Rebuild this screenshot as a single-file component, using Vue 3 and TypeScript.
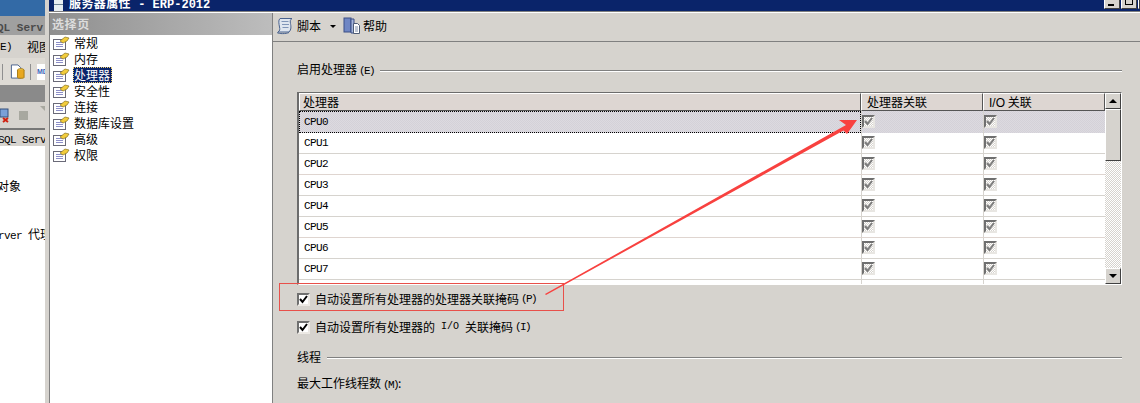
<script setup lang="ts">
const pages = ['常规', '内存', '处理器', '安全性', '连接', '数据库设置', '高级', '权限']
const cpus = ['CPU0', 'CPU1', 'CPU2', 'CPU3', 'CPU4', 'CPU5', 'CPU6', 'CPU7']
</script>

<template>
  <div class="screen">
    <aside class="behind">
      <div class="b-blue"></div>
      <div class="b-title"><span class="title-mono">QL Serv</span></div>
      <div class="b-menu"><span class="mono">E)</span><span class="b-view">视图</span></div>
      <div class="b-tools">
        <i class="sep"></i>
        <svg width="16" height="17" viewBox="0 0 16 17"><path d="M1.500 1.500h7l3 3v11h-10z" fill="#fff" stroke="#46608c"/><ellipse cx="11.500" cy="7" rx="3.500" ry="1.500" fill="#f6cf52" stroke="#a87a10"/><path d="M8 7v8c0 1 7 1 7 0V7" fill="#e8a820" stroke="#a87a10"/></svg>
        <i class="sep sep2"></i>
        <span class="b-mdx">MD</span>
      </div>
      <div class="b-bar"></div>
      <div class="b-tools2">
        <svg width="10" height="16" viewBox="0 0 10 16"><rect x="0" y="2" width="8" height="8" fill="#7aa0d8" stroke="#35507c"/><path d="M3 11l5 4M8 11l-5 4" stroke="#d02010" stroke-width="2"/></svg>
        <i class="stop"></i>
        <i class="tri"></i>
      </div>
      <div class="b-row"><span class="mono">SQL Serv</span></div>
      <div class="b-tree">
        <div class="obj">对象</div>
        <div class="agent"><span class="mono pre">rver </span>代理</div>
      </div>
    </aside>

    <main class="dialog">
      <header class="titlebar">
        <svg class="t-icon" width="9" height="12" viewBox="0 0 9 12"><rect x="0" y="0" width="9" height="12" fill="#e8eef2"/><rect x="0" y="4" width="9" height="1" fill="#6f8596"/></svg>
        <b class="t-text">服务器属性<span class="mono-b"> - ERP-2012</span></b>
        <div class="t-btns"><span class="tb"><i class="tb-min"></i></span><span class="tb"><i class="tb-max"></i></span><span class="tb tb-end"></span></div>
      </header>
      <div class="body">
        <nav class="side">
          <div class="side-head">选择页</div>
          <ul class="pages">
            <li v-for="p in pages" :key="p">
              <svg width="17" height="15" viewBox="0 0 17 15">
                <rect x="0.500" y="3.500" width="12" height="10" fill="#fff" stroke="#6a6a78"/>
                <path d="M3 6.500h7M3 8.500h7M3 10.500h7" stroke="#8d8fc8"/>
                <path d="M7 5l5-4 4 1-2 3-4 2z" fill="#f2cc3c" stroke="#8a7420" stroke-width=".7"/>
              </svg>
              <span :class="{ sel: p === '处理器' }">{{ p }}</span>
            </li>
          </ul>
        </nav>
        <section class="content">
          <div class="toolbar">
            <svg width="19" height="18" viewBox="0 0 19 18"><path d="M4 1.500h12c-2 1-2 3-1.500 5 .5 3 1 6-1.500 8.500H2c2-1 2-3 1.500-5C3 7 2 3 4 1.500z" fill="#dfe6f0" stroke="#49628e"/><path d="M5.500 4.500h7M6 7.500h7M6.500 10.500h6" stroke="#8095b8"/><path d="M1 15.500c2 1.500 9 1.500 12 0" fill="none" stroke="#49628e"/></svg>
            <span class="tool-l">脚本</span>
            <i class="caret"></i>
            <svg class="help" width="18" height="18" viewBox="0 0 18 18"><rect x="1" y="1" width="7" height="14" fill="#6f86c4" stroke="#3b4f86"/><path d="M8 2h3v14H8z" fill="#a6b6dc" stroke="#3b4f86"/><path d="M10.500 6.500h4l2 2v8h-6z" fill="#fff" stroke="#4e5c76"/><path d="M12 10h3M12 12h3M12 14h3" stroke="#7d8ca8"/></svg>
            <span class="tool-l">帮助</span>
          </div>
          <div class="form">
            <div class="legend first"><span>启用处理器<span class="ak">(E)</span></span><i></i></div>
            <div class="grid">
              <div class="table">
                <div class="thead">
                  <div class="th c1">处理器</div>
                  <div class="th c2">处理器关联</div>
                  <div class="th c3"><span class="io">I/O</span> 关联</div>
                </div>
                <div v-for="(c, i) in cpus" :key="c" class="tr" :class="{ active: i === 0, pink: i % 3 === 2 }">
                  <div class="td c1"><span class="mono">{{ c }}</span></div>
                  <div class="td c2"><span class="dis"><svg width="9" height="9" viewBox="0 0 9 9"><path d="M1 4l2.500 3L8 1" fill="none" stroke="#7c7c7c" stroke-width="2"/></svg></span></div>
                  <div class="td c3"><span class="dis"><svg width="9" height="9" viewBox="0 0 9 9"><path d="M1 4l2.500 3L8 1" fill="none" stroke="#7c7c7c" stroke-width="2"/></svg></span></div>
                </div>
                <div class="tr stub"><div class="td c1"></div><div class="td c2"></div><div class="td c3"></div></div>
              </div>
              <div class="scroll">
                <div class="sb up"><i></i></div>
                <div class="thumb"></div>
                <div class="track"></div>
                <div class="sb down"><i></i></div>
              </div>
            </div>
            <label class="check one"><span class="box"><svg width="9" height="9" viewBox="0 0 9 9"><path d="M1 4l2.500 3L8 1" fill="none" stroke="#000" stroke-width="2"/></svg></span>自动设置所有处理器的处理器关联掩码<span class="ak">(P)</span></label>
            <label class="check two"><span class="box"><svg width="9" height="9" viewBox="0 0 9 9"><path d="M1 4l2.500 3L8 1" fill="none" stroke="#000" stroke-width="2"/></svg></span>自动设置所有处理器的<span class="mono io2">I/O</span>关联掩码<span class="ak">(I)</span></label>
            <div class="legend thread"><span>线程</span><i></i></div>
            <div class="field">最大工作线程数<span class="ak">(M)</span>:</div>
          </div>
        </section>
      </div>
    </main>

    <svg class="mark" width="1140" height="403" viewBox="0 0 1140 403">
      <rect x="279.500" y="283.500" width="284" height="27" fill="none" stroke="#e8504a"/>
      <path d="M545 294L846 125L839 120L857 120L847 134L843.500 130.500L546 295z" fill="#f8413f"/>
    </svg>
  </div>
</template>

<style>
html, body { margin: 0; background: #fff; overflow: hidden; }
</style>

<style scoped>
.screen { position: relative; width: 1140px; height: 403px; display: flex; overflow: hidden; font: 12px/16px "Noto Sans CJK SC", sans-serif; color: #000; background: #fff; }
.mono { font: 11px/16px "Liberation Mono", monospace; letter-spacing: -.6px; flex: none; }
.pre { white-space: pre; }
.ak { font: 11px/16px "Liberation Mono", monospace; letter-spacing: -1.600px; margin-left: 2px; }

.behind { width: 45px; flex: none; display: flex; flex-direction: column; overflow: hidden; white-space: nowrap; }
.b-blue { height: 16px; background: #336aa6; }
.b-title { height: 19px; background: #a0a0a0; line-height: 19px; margin-right: -20px; }
.title-mono { font: bold 11px/19px "Liberation Mono", monospace; color: #4a4a4a; margin-left: -3px; display: inline-block; }
.b-menu { height: 23px; background: #d6d3ce; display: flex; align-items: center; }
.b-menu .mono { width: 27px; }
.b-view { flex: none; }
.b-tools { height: 27px; background: #dedbd5; display: flex; align-items: center; }
.sep { width: 1px; height: 16px; background: #8f8f8f; margin: 0 7px 0 2px; flex: none; }
.sep2 { margin: 0 6px 0 5px; }
.b-mdx { font: bold 7px/16px "Liberation Sans", sans-serif; color: #3b66b8; background: #fff; flex: none; width: 8px; overflow: hidden; }
.b-bar { height: 17px; background: #8a8a8a; }
.b-tools2 { height: 28px; background: #d6d3ce; display: flex; align-items: center; border-bottom: 2px solid #777; box-sizing: border-box; }
.b-tools2 svg { flex: none; }
.stop { width: 9px; height: 9px; background: #a8a8a0; margin-left: 9px; flex: none; }
.tri { width: 0; height: 0; border: 5px solid transparent; border-top-color: #a8a8a0; margin: -8px 0 0 12px; flex: none; }
.b-row { height: 16px; background: #d6d3ce; }
.b-row .mono { display: inline-block; margin-left: -2px; }
.b-tree { flex: 1; background: #fff; }
.obj { margin: 32px 0 0 -3px; }
.agent { margin-top: 32px; margin-left: -2px; }

.dialog { flex: 1; min-width: 0; display: flex; flex-direction: column; background: #d6d3ce; border-left: 4px solid #d6d3ce; }
.titlebar { height: 12px; flex: none; background: #0a246a; display: flex; align-items: center; color: #fff; overflow: hidden; }
.t-icon { margin: 0 0 0 5px; flex: none; }
.t-text { margin-left: 6px; font-size: 12px; letter-spacing: .4px; line-height: 12px; white-space: pre; margin-top: -5px; }
.mono-b { font: bold 12px/12px "Liberation Mono", monospace; letter-spacing: 0; }
.t-btns { margin-left: auto; display: flex; align-self: flex-start; margin-top: -5px; }
.tb { width: 16px; height: 14px; background: #d6d3ce; border: 1px solid; border-color: #fff #404040 #404040 #fff; box-sizing: border-box; margin-left: 1px; position: relative; display: block; }
.tb-end { width: 2px; }
.tb-min { position: absolute; left: 3px; bottom: 2px; width: 6px; height: 2px; background: #000; }
.tb-max { position: absolute; left: 3px; top: 0; width: 8px; height: 9px; border: 1px solid #000; border-top-width: 2px; box-sizing: border-box; }

.body { flex: 1; display: flex; min-height: 0; border-top: 1px solid #fff; box-shadow: 0 -1px #808080; }
.side { width: 223px; box-sizing: border-box; border-left: 1px solid #808080; flex: none; display: flex; flex-direction: column; background: #fff; }
.side-head { height: 22px; background: linear-gradient(90deg, #8f8f8f, #bdbdbd); color: #dcdcdc; font-weight: bold; font-size: 12px; letter-spacing: .6px; line-height: 21px; padding-left: 2px; }
.pages { list-style: none; margin: 0; padding: 0 0 0 3px; }
.pages li { height: 16px; display: flex; align-items: center; gap: 4px; white-space: nowrap; }
.pages li svg { flex: none; }
.sel { background: #0a246a; color: #fff; outline: 1px dotted #f0d070; outline-offset: -1px; margin-left: -1px; padding: 0 2px 0 1px; }

.content { flex: 1; min-width: 0; display: flex; flex-direction: column; border-left: 1px solid #808080; }
.toolbar { height: 29px; flex: none; box-sizing: border-box; border-bottom: 1px solid #808080; display: flex; align-items: center; padding: 0 0 3px 3px; }
.tool-l { margin-left: 2px; }
.caret { width: 0; height: 0; border: 3px solid transparent; border-top-color: #000; border-bottom-width: 0; margin: 1px 5px 0 9px; }
.help { margin-left: 2px; }

.form { flex: 1; padding-left: 24px; padding-right: 18px; display: flex; flex-direction: column; min-height: 0; }
.legend { display: flex; align-items: center; gap: 6px; white-space: nowrap; }
.legend i { flex: 1; height: 1px; background: #808080; box-shadow: 0 1px #fff; }
.first { margin-top: 20px; height: 16px; }
.grid { margin-top: 14px; width: 825px; height: 193px; flex: none; box-sizing: border-box; border: 1px solid; border-color: #6c6c6c #fff #fff #6c6c6c; border-left-width: 2px; display: flex; overflow: hidden; background: #fff; }
.table { width: 806px; flex: none; }
.thead { display: flex; height: 18px; }
.th { box-sizing: border-box; height: 18px; background: #ddd6d2; border: 1px solid; border-color: #fff #555 #555 #fff; padding-left: 5px; line-height: 16px; }
.th.c1 { padding-left: 3px; }
.io { font-family: "Liberation Sans", sans-serif; }
.c1 { width: 562px; flex: none; }
.c2 { width: 122px; flex: none; }
.c3 { flex: 1; }
.tr { display: flex; height: 21px; box-sizing: border-box; border-bottom: 1px solid #d6d3ce; background: #fff; }
.tr.pink { border-bottom-color: #dfd5d0; }
.tr.stub { height: 4px; border-bottom: 0; }
.tr.active { height: 22px; background: repeating-conic-gradient(#dcdae0 0 25%, #d4d1d8 0 50%) 0 0 / 2px 2px; border-bottom: 0; }
.tr.active .c1 { outline: 1px dotted #000; outline-offset: -1px; }
.td { box-sizing: border-box; display: flex; align-items: center; padding-left: 5px; padding-bottom: 1px; }
.td.c2, .td.c3 { border-left: 1px solid #d6d3ce; padding-left: 0; }
.dis { width: 13px; height: 13px; box-sizing: border-box; display: flex; align-items: center; justify-content: center; border: 2px solid; border-color: #6f6f6f #e8e6e2 #e8e6e2 #6f6f6f; background: repeating-conic-gradient(#d6d3ce 0 25%, #fff 0 50%) 0 0 / 2px 2px; }
.scroll { flex: 1; display: flex; flex-direction: column; background: #d6d3ce; }
.sb { height: 16px; flex: none; box-sizing: border-box; background: #d6d3ce; border: 1px solid; border-color: #fff #404040 #404040 #fff; display: flex; align-items: center; justify-content: center; }
.up i { border: 4px solid transparent; border-bottom-color: #000; border-top-width: 0; }
.down i { border: 4px solid transparent; border-top-color: #000; border-bottom-width: 0; }
.thumb { height: 52px; flex: none; box-sizing: border-box; background: #d6d3ce; border: 1px solid; border-color: #fff #404040 #404040 #fff; }
.track { flex: 1; background: repeating-conic-gradient(#d6d3ce 0 25%, #fff 0 50%) 0 0 / 2px 2px; }

.check { display: flex; align-items: center; white-space: pre; }
.box { width: 13px; height: 13px; box-sizing: border-box; background: #fff; border: 2px solid; border-color: #6f6f6f #ece9e4 #ece9e4 #6f6f6f; display: flex; align-items: center; justify-content: center; margin-right: 5px; flex: none; }
.io2 { margin: 0 6px; letter-spacing: 0; font-size: 10px; }
.one { margin-top: 6px; height: 16px; }
.two { margin-top: 12px; height: 16px; }
.thread { margin-top: 14px; height: 16px; }
.field { margin-top: 10px; }

.mark { position: absolute; left: 0; top: 0; pointer-events: none; }
</style>
